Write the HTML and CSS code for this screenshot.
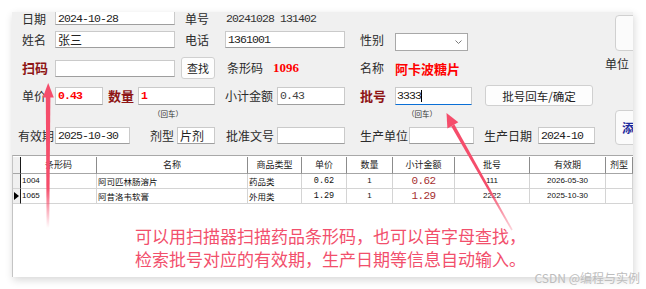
FILE: index.html
```html
<!DOCTYPE html>
<html lang="zh-CN">
<head>
  <meta charset="UTF-8" />
  <meta name="viewport" content="width=device-width, initial-scale=1.0" />
  <title>药品销售</title>
  <link rel="stylesheet" href="styles.css">
</head>
<body>
  <div class="window">
    <div class="form">
      <div class="fields">
        <div class="row r1">
          <span class="lbl c-lead">日期</span>
          <span class="box wide mono">2024-10-28</span>
          <span class="lbl c-no">单号</span>
          <span class="plain mono">20241028 131402</span>
        </div>
        <div class="row r2">
          <span class="lbl c-lead">姓名</span>
          <span class="box wide">张三</span>
          <span class="lbl c-tel">电话</span>
          <span class="box wide mono">1361001</span>
          <span class="lbl c-sex">性别</span>
          <span class="box select">
            <svg width="7" height="4" viewBox="0 0 7 4"><polyline points="0.5,0.5 3.5,3.5 6.5,0.5" fill="none" stroke="#7a7a7a" stroke-width="1"/></svg>
          </span>
        </div>
        <div class="row r3">
          <span class="lbl key c-lead">扫码</span>
          <span class="box wide"></span>
          <button class="btn find">查找</button>
          <span class="lbl c-code">条形码</span>
          <span class="hit code">1096</span>
          <span class="lbl c-name">名称</span>
          <span class="hit name">阿卡波糖片</span>
        </div>
        <div class="row r4">
          <span class="lbl c-lead">单价</span>
          <span class="box price mono hot">0.43</span>
          <span class="lbl key c-qty">数量</span>
          <span class="box qty mono hot">1</span>
          <span class="lbl c-sub">小计金额</span>
          <span class="box mid mono dim">0.43</span>
          <span class="lbl key c-batch">批号</span>
          <span class="box batch mono">3333<i class="caret"></i></span>
          <button class="btn confirm">批号回车/确定</button>
        </div>
        <div class="row hint">
          <span class="tip qty-tip">（回车）</span>
          <span class="tip batch-tip">（回车）</span>
        </div>
        <div class="row r5">
          <span class="lbl c-exp">有效期</span>
          <span class="box exp mono">2025-10-30</span>
          <span class="lbl c-form">剂型</span>
          <span class="box form-box">片剂</span>
          <span class="lbl c-appr">批准文号</span>
          <span class="box mid"></span>
          <span class="lbl c-maker">生产单位</span>
          <span class="box maker"></span>
          <span class="lbl c-made">生产日期</span>
          <span class="box made mono">2024-10</span>
        </div>
      </div>
      <div class="side">
        <div class="tall b1"></div>
        <span class="lbl unit">单位</span>
        <div class="tall b2">添</div>
      </div>
    </div>

    <div class="grid">
      <table class="sheet">
        <colgroup>
          <col class="k-ind"><col class="k-code"><col class="k-name"><col class="k-type"><col class="k-price">
          <col class="k-qty"><col class="k-sum"><col class="k-batch"><col class="k-exp"><col class="k-form">
        </colgroup>
        <thead>
          <tr>
            <th class="ind"></th><th>条形码</th><th>名称</th><th>商品类型</th><th>单价</th>
            <th>数量</th><th>小计金额</th><th>批号</th><th>有效期</th><th>剂型</th>
          </tr>
        </thead>
        <tbody>
          <tr>
            <td class="ind"></td><td class="num">1004</td><td class="txt">阿司匹林肠溶片</td><td class="txt">药品类</td>
            <td class="fig">0.62</td><td class="num mid-al">1</td><td class="sum">0.62</td>
            <td class="num mid-al">111</td><td class="num mid-al">2026-05-30</td><td></td>
          </tr>
          <tr>
            <td class="ind cur"></td><td class="num">1065</td><td class="txt">阿昔洛韦软膏</td><td class="txt">外用类</td>
            <td class="fig">1.29</td><td class="num mid-al">1</td><td class="sum">1.29</td>
            <td class="num mid-al">2222</td><td class="num mid-al">2025-10-30</td><td></td>
          </tr>
        </tbody>
      </table>
      <p class="note">可以用扫描器扫描药品条形码，也可以首字母查找，<br>检索批号对应的有效期，生产日期等信息自动输入。</p>
    </div>
  </div>

  <svg class="marks" width="646" height="289" viewBox="0 0 646 289">
    <defs>
      <linearGradient id="fadeA" x1="0" y1="95" x2="0" y2="228" gradientUnits="userSpaceOnUse">
        <stop offset="0" stop-color="#f54d6b"/>
        <stop offset="0.7" stop-color="#f54d6b"/>
        <stop offset="1" stop-color="#f54d6b" stop-opacity="0"/>
      </linearGradient>
      <linearGradient id="fadeB" x1="452" y1="125" x2="512" y2="230" gradientUnits="userSpaceOnUse">
        <stop offset="0" stop-color="#f54d6b"/>
        <stop offset="0.6" stop-color="#f54d6b"/>
        <stop offset="1" stop-color="#f54d6b" stop-opacity="0.25"/>
      </linearGradient>
    </defs>
    <!-- arrow to 扫码 -->
    <polygon points="45.8,96 50.4,96 49.2,228 46.6,228" fill="url(#fadeA)"/>
    <polygon points="48.2,83 42.8,97.5 53.8,97.5" fill="#f54d6b"/>
    <!-- arrow to 批号 -->
    <polygon points="454.4,124.4 451.2,126.2 511.3,230.4 512.7,229.6" fill="url(#fadeB)"/>
    <polygon points="446.5,113 458.3,122.3 447.4,128.4" fill="#f54d6b"/>
  </svg>

  <div class="mark">CSDN @编程与实例</div>
</body>
</html>
```

FILE: styles.css
```css
* {
  box-sizing: border-box;
}

body {
  margin: 0;
  width: 646px;
  height: 289px;
  position: relative;
  overflow: hidden;
  background: #fff;
  color: #2b2b2b;
  font-family: "Noto Sans CJK SC", "Noto Sans", sans-serif;
}

.window {
  margin: 12px 0 0 12px;
  width: 621px;
  height: 265px;
  display: flex;
  flex-direction: column;
  box-shadow: 1px 3px 8px rgba(0, 0, 0, 0.16);
}

/* form part */
.form {
  flex: none;
  display: flex;
  height: 143px;
  background: #f0f0f0;
}

.fields {
  flex: none;
  width: 593px;
}

.row {
  display: flex;
  align-items: center;
  padding-left: 10px;
}

.r1 { height: 13px; }
.r2 { height: 17px; margin-top: 6px; }
.r3 { height: 22px; margin-top: 9px; }
.r4 { height: 21px; margin-top: 6px; }
.hint { height: 10px; margin-top: 3px; }
.r5 { height: 19px; margin-top: 7px; }

.lbl {
  flex: none;
  font-size: 12px;
  line-height: 14px;
  white-space: nowrap;
  color: #2b2b2b;
}

.key {
  color: #8e1515;
  font-weight: bold;
  font-size: 13px;
}

.box {
  flex: none;
  display: flex;
  align-items: center;
  height: 17px;
  padding: 0 2px;
  background: #fff;
  border: 1px solid #cacaca;
  border-bottom-color: #9e9e9e;
  font-size: 12px;
  line-height: 14px;
  color: #222;
  white-space: nowrap;
  overflow: hidden;
}

.r1 .box {
  height: 13px;
  border-top: 0;
  line-height: 11px;
}

.r1 .lbl,
.r1 .plain { line-height: 12px; }
.r4 .box { height: 18px; }

.mono {
  font-family: "Liberation Mono", monospace;
  font-size: 11.5px;
  letter-spacing: -0.9px;
}

.plain { color: #333; }
.hot { color: #f00; font-weight: bold; }
.dim { color: #444; }

.c-lead { width: 33px; }
.wide { width: 120px; }
.c-no { margin-left: 10px; width: 41px; }
.c-tel { margin-left: 10px; width: 40px; }
.c-sex { margin-left: 15px; width: 35px; }

.select {
  width: 73px;
  height: 18px;
  margin-top: 4px;
  justify-content: flex-end;
  padding-right: 5px;
  border-color: #a8a8a8;
}

.btn {
  flex: none;
  padding: 0;
  background: #fdfdfd;
  border: 1px solid #d0d0d0;
  border-radius: 3px;
  color: #222;
  font-family: "Noto Sans CJK SC", sans-serif;
}

.find { margin-left: 6px; width: 34px; height: 22px; font-size: 11px; }
.c-code { margin-left: 12px; width: 46px; }
.c-name { width: 35px; }

.hit {
  flex: none;
  color: #f00;
  font-weight: bold;
}

.code {
  width: 87px;
  font-family: "Liberation Serif", serif;
  font-size: 13px;
}

.name { font-size: 13px; }

.price { width: 48px; }
.c-qty { margin-left: 5px; width: 30px; }
.qty { width: 77px; }
.c-sub { margin-left: 10px; width: 52px; }
.mid { width: 68px; }
.c-batch { margin-left: 15px; width: 35px; }

.batch {
  width: 77px;
  padding-left: 1px;
  border-bottom-color: #0a6fd6;
}

.caret {
  display: inline-block;
  width: 1px;
  height: 12px;
  background: #000;
}

.confirm { margin-left: 13px; width: 108px; height: 21px; font-size: 11.5px; }

.tip {
  flex: none;
  width: 30px;
  font-size: 7.5px;
  line-height: 10px;
  color: #333;
  white-space: nowrap;
}

.qty-tip { margin-left: 131px; }
.batch-tip { margin-left: 224px; }

.c-exp { margin-left: -4px; width: 37px; }
.exp { width: 75px; }
.c-form { margin-left: 20px; width: 27px; }
.form-box { width: 38px; }
.c-appr { margin-left: 11px; width: 51px; }
.c-maker { margin-left: 15px; width: 49px; }
.maker { width: 65px; }
.c-made { margin-left: 10px; width: 54px; }
.made { width: 57px; }

/* right column, cut by the window edge */
.side {
  flex: none;
  width: 28px;
  overflow: hidden;
  display: flex;
  flex-direction: column;
  align-items: flex-start;
}

.tall {
  flex: none;
  margin-left: 10px;
  width: 60px;
  background: #fbfbfb;
  border: 1px solid #d0d0d0;
  border-radius: 4px;
}

.b1 { margin-top: 3px; height: 36px; }
.unit { margin-top: 6px; }

.b2 {
  margin-top: 39px;
  height: 35px;
  padding-left: 6px;
  display: flex;
  align-items: center;
  color: #1b2a9c;
  font-weight: bold;
  font-size: 12px;
}

/* grid part */
.grid {
  flex: 1;
  padding-top: 1px;
  background: #fff;
  border-top: 1px solid #a8a8a8;
  border-left: 1px solid #c4c4c4;
  overflow: hidden;
}

.sheet {
  width: 620px;
  table-layout: fixed;
  border-collapse: separate;
  border-spacing: 0;
}

.k-ind { width: 8px; }
.k-code { width: 76px; }
.k-name { width: 151px; }
.k-type { width: 54px; }
.k-price { width: 45px; }
.k-qty { width: 46px; }
.k-sum { width: 62px; }
.k-batch { width: 75px; }
.k-exp { width: 76px; }
.k-form { width: 27px; }

.sheet th,
.sheet td {
  padding: 0;
  overflow: hidden;
  white-space: nowrap;
}

.sheet thead tr { height: 17px; }
.sheet tbody tr { height: 15px; }

.sheet th {
  font-weight: normal;
  font-size: 9px;
  line-height: 12px;
  color: #222;
  background: #fff;
  text-align: center;
  border-right: 1px solid #8c8c8c;
  border-bottom: 1px solid #a6a6a6;
}

.sheet th:last-child {
  text-align: left;
  padding-left: 4px;
}

.sheet td {
  font-size: 8.5px;
  line-height: 12px;
  color: #111;
  border-right: 1px solid #d4d4d4;
  border-bottom: 1px solid #d4d4d4;
}

.sheet .ind {
  background: #f0f0f0;
  border-right-color: #1a1a1a;
}

.sheet .cur {
  position: relative;
}

.sheet .cur::before {
  content: "";
  position: absolute;
  left: 1px;
  top: 3px;
  border-left: 5px solid #000;
  border-top: 4px solid transparent;
  border-bottom: 4px solid transparent;
}

.sheet .num {
  font-family: "Liberation Sans", sans-serif;
  font-size: 8px;
  padding-left: 1px;
}

.sheet .txt { padding-left: 1px; }
.sheet .mid-al { text-align: center; padding-left: 0; }

.sheet .fig {
  font-family: "Liberation Mono", monospace;
  font-size: 8.5px;
  text-align: center;
}

.sheet .sum {
  font-family: "Liberation Mono", monospace;
  font-size: 11px;
  letter-spacing: -0.6px;
  color: #a53030;
  text-align: center;
}

.note {
  margin: 20px 0 0;
  padding-left: 15px;
  text-align: center;
  font-size: 17px;
  line-height: 23px;
  color: #f24f6c;
}

/* overlays */
.marks {
  position: absolute;
  left: 0;
  top: 0;
  pointer-events: none;
}

.mark {
  position: absolute;
  right: 6px;
  top: 270px;
  font-size: 12px;
  line-height: 15px;
  color: #bdbdbd;
  white-space: nowrap;
}
```
